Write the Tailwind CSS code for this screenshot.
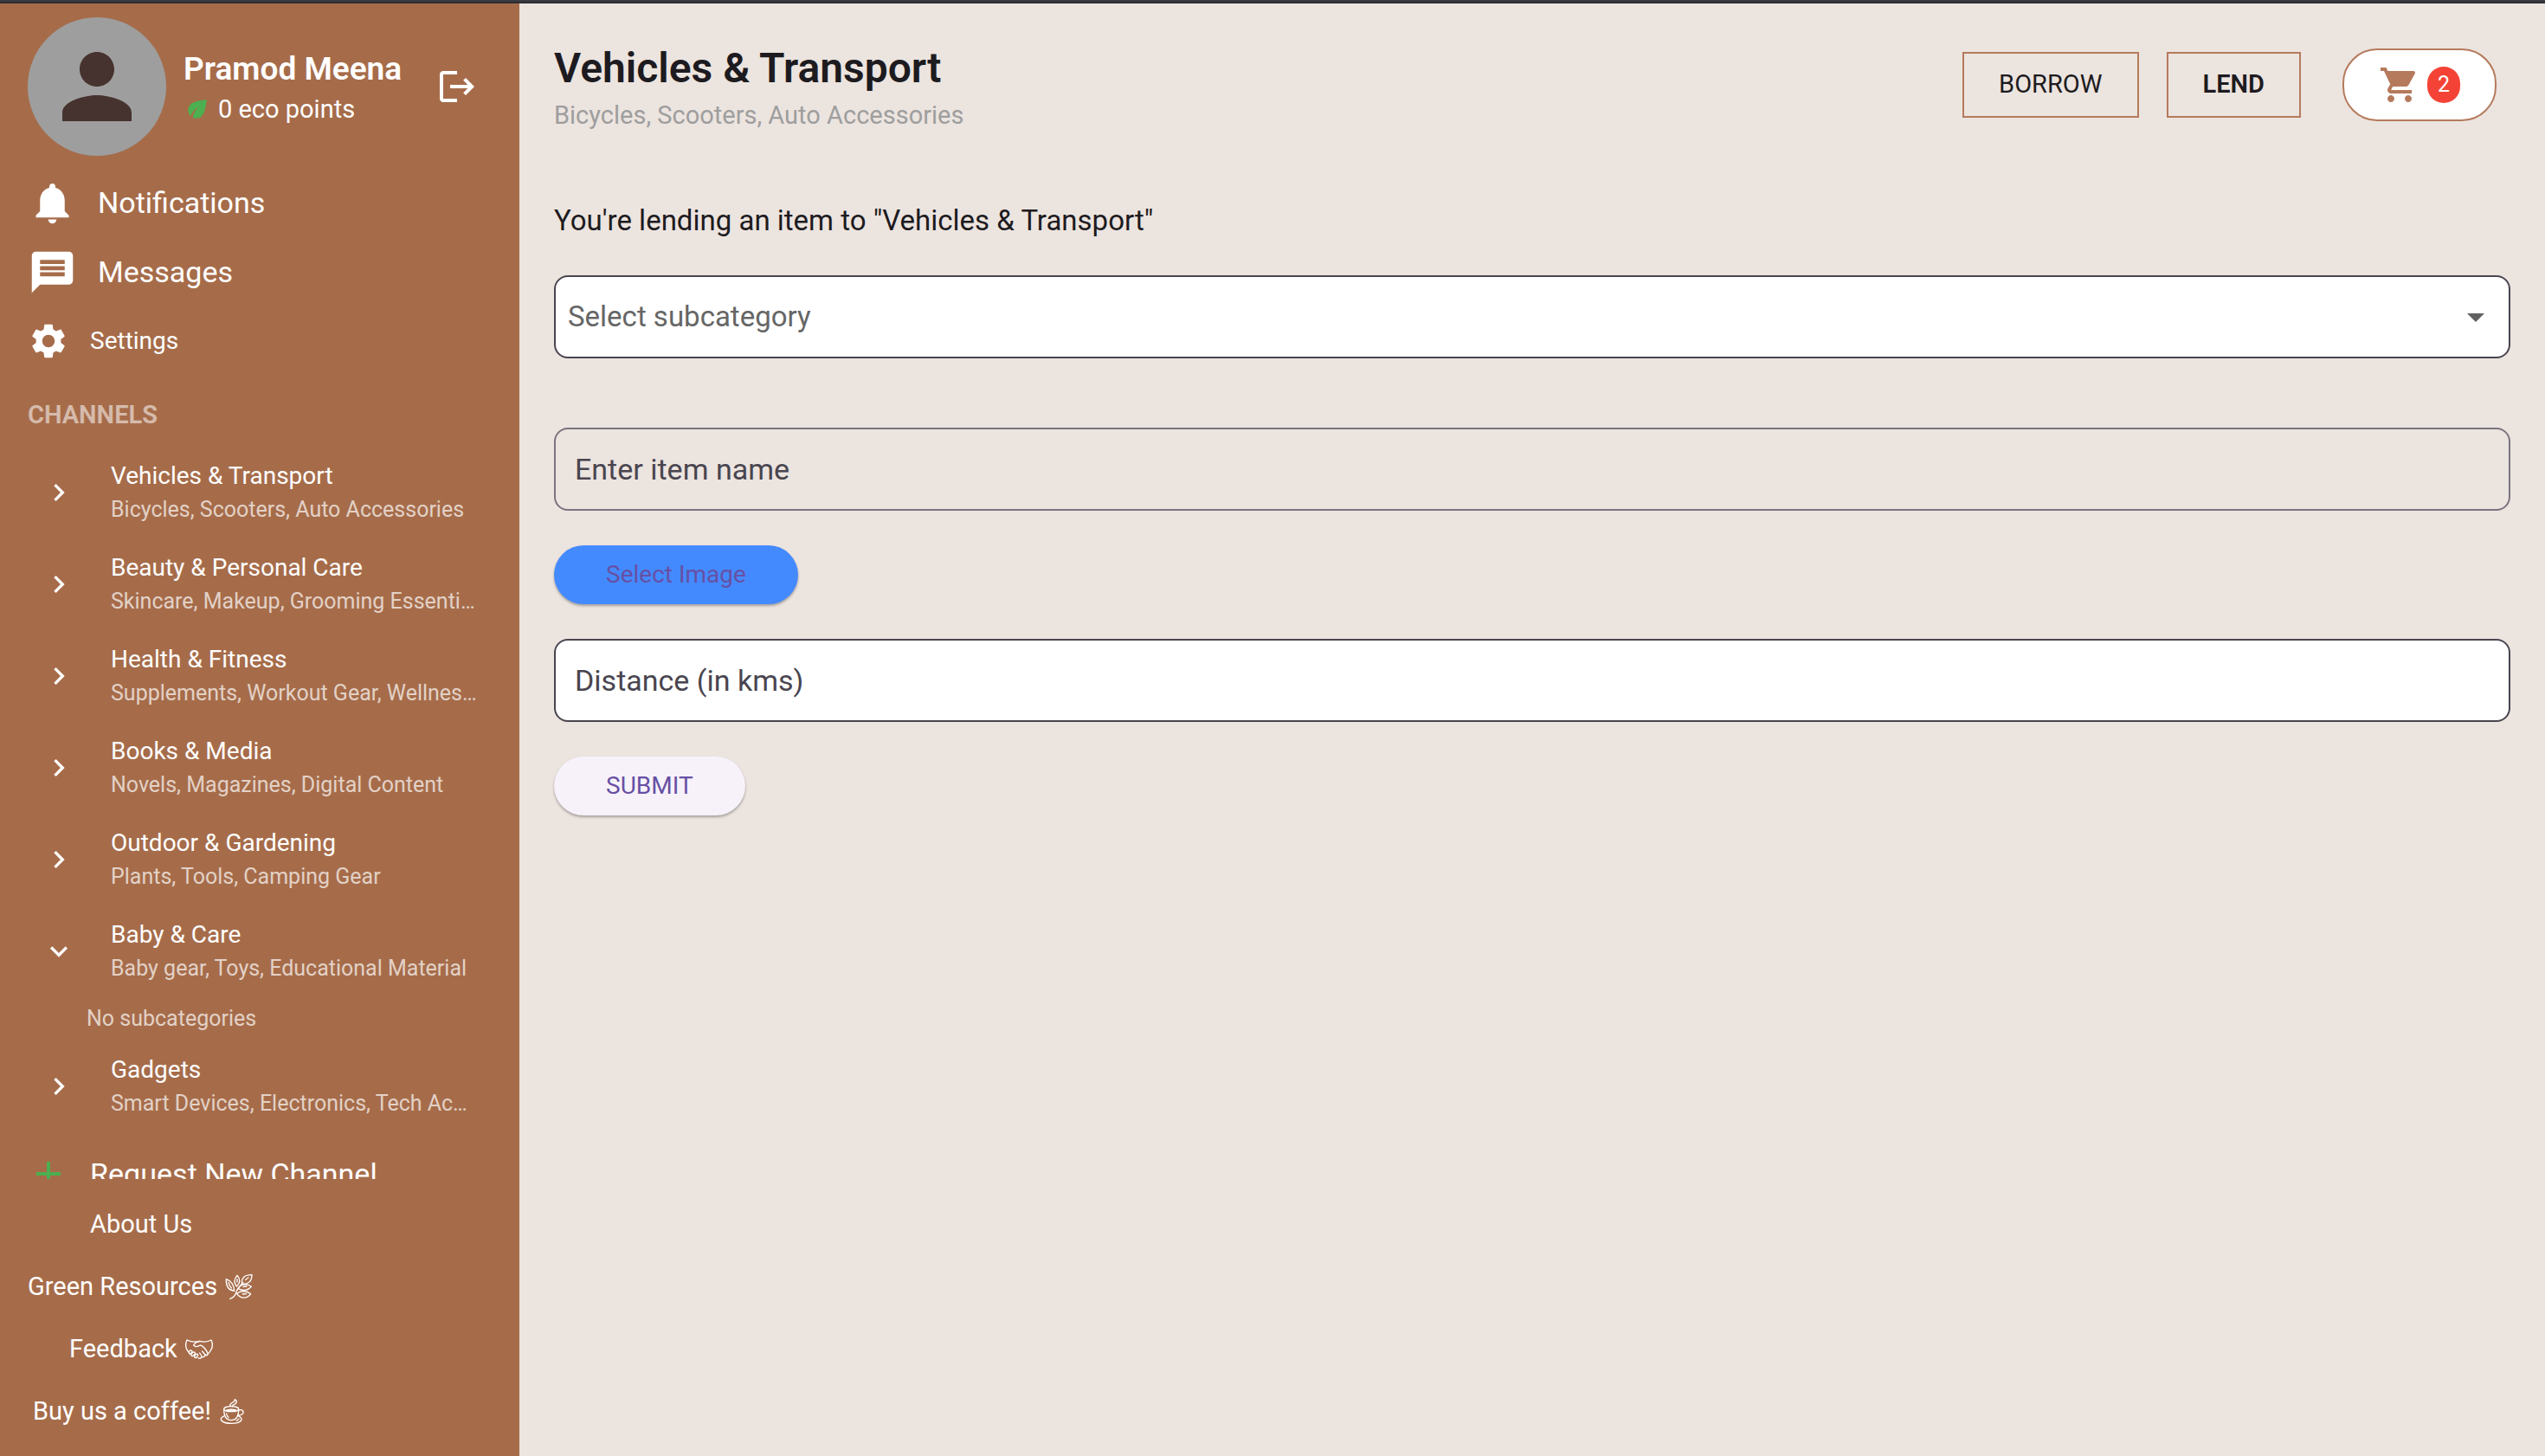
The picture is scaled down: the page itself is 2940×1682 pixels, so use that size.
<!DOCTYPE html>
<html lang="en">
<head>
<meta charset="utf-8">
<title>Vehicles &amp; Transport</title>
<script src="https://cdn.jsdelivr.net/npm/@tailwindcss/browser@4"></script>
</head>
<body class="flex h-screen flex-col overflow-hidden bg-[#ece4df] font-[Roboto,sans-serif] text-[#1d1b20]">
<svg class="hidden">
  <symbol id="chevron-right" viewBox="0 0 24 24"><path d="M8.59 16.59 13.17 12 8.59 7.41 10 6l6 6-6 6z"/></symbol>
  <symbol id="chevron-down" viewBox="0 0 24 24"><path d="M16.59 8.59 12 13.17 7.41 8.59 6 10l6 6 6-6z"/></symbol>
</svg>
<div class="h-1 shrink-0 border-t-2 border-[#3b3a40] bg-[#2d2c33]"></div>
<div class="flex min-h-0 flex-1">
  <aside class="flex w-[600px] shrink-0 flex-col bg-[#a66c4a] text-white">
    <div class="min-h-0 flex-1 overflow-hidden">
      <header class="flex h-[190px] items-center pt-0.5 pr-12 pl-8">
        <span class="flex size-40 shrink-0 items-center justify-center rounded-full bg-[#9e9e9e] text-[#46322e]">
          <svg class="size-30" viewBox="0 0 24 24" fill="currentColor"><path d="M12 12c2.21 0 4-1.79 4-4s-1.79-4-4-4-4 1.79-4 4 1.79 4 4 4zm0 2c-2.67 0-8 1.34-8 4v2h16v-2c0-2.66-5.33-4-8-4z"/></svg>
        </span>
        <div class="ml-5 flex-1 pt-1">
          <h2 class="text-[37px] leading-12 font-semibold whitespace-nowrap">Pramod Meena</h2>
          <p class="flex items-center gap-2 text-[29px] leading-11 whitespace-nowrap">
            <svg class="size-8 fill-[#4caf50]" viewBox="0 0 24 24"><path d="M6.05 8.05c-2.73 2.73-2.73 7.15-.02 9.88 1.47-3.4 4.09-6.24 7.36-7.93-2.77 2.34-4.71 5.61-5.39 9.32 2.6 1.23 5.8.78 7.95-1.37C19.43 14.47 20 4 20 4S9.53 4.57 6.05 8.05z"/></svg>
            0 eco points
          </p>
        </div>
        <button type="button" aria-label="Log out">
          <svg class="size-12" viewBox="0 0 24 24" fill="currentColor"><path d="M17 7l-1.41 1.41L18.17 11H8v2h10.17l-2.58 2.58L17 17l5-5zM4 5h8V3H4c-1.1 0-2 .9-2 2v14c0 1.1.9 2 2 2h8v-2H4V5z"/></svg>
        </button>
      </header>
      <nav>
        <a href="#" class="flex h-20 items-center gap-6 pl-8 text-[34px]">
          <svg class="size-[57px]" viewBox="0 0 24 24" fill="currentColor"><path d="M12 22c1.1 0 2-.9 2-2h-4c0 1.1.89 2 2 2zm6-6v-5c0-3.07-1.64-5.64-4.5-6.32V4c0-.83-.67-1.5-1.5-1.5s-1.5.67-1.5 1.5v.68C7.63 5.36 6 7.92 6 11v5l-2 2v1h16v-1l-2-2z"/></svg>
          Notifications
        </a>
        <a href="#" class="flex h-20 items-center gap-6 pl-8 text-[34px]">
          <svg class="size-[57px]" viewBox="0 0 24 24" fill="currentColor"><path d="M20 2H4c-1.1 0-1.99.9-1.99 2L2 22l4-4h14c1.1 0 2-.9 2-2V4c0-1.1-.9-2-2-2zm-2 12H6v-2h12v2zm0-3H6V9h12v2zm0-3H6V6h12v2z"/></svg>
          Messages
        </a>
        <a href="#" class="flex h-20 items-center gap-6 pl-8 text-[28px]">
          <svg class="size-12" viewBox="0 0 24 24" fill="currentColor"><path d="M19.14 12.94c.04-.3.06-.61.06-.94 0-.32-.02-.64-.07-.94l2.03-1.58c.18-.14.23-.41.12-.61l-1.92-3.32c-.12-.22-.37-.29-.59-.22l-2.39.96c-.5-.38-1.03-.7-1.62-.94l-.36-2.54c-.04-.24-.24-.41-.48-.41h-3.84c-.24 0-.43.17-.47.41l-.36 2.54c-.59.24-1.13.57-1.62.94l-2.39-.96c-.22-.08-.47 0-.59.22L2.74 8.87c-.12.21-.08.47.12.61l2.03 1.58c-.05.3-.09.63-.09.94s.02.64.07.94l-2.03 1.58c-.18.14-.23.41-.12.61l1.92 3.32c.12.22.37.29.59.22l2.39-.96c.5.38 1.03.7 1.62.94l.36 2.54c.05.24.24.41.48.41h3.84c.24 0 .44-.17.47-.41l.36-2.54c.59-.24 1.13-.56 1.62-.94l2.39.96c.22.08.47 0 .59-.22l1.92-3.32c.12-.22.07-.47-.12-.61l-2.01-1.58zM12 15.6c-1.98 0-3.6-1.62-3.6-3.6s1.62-3.6 3.6-3.6 3.6 1.62 3.6 3.6-1.62 3.6-3.6 3.6z"/></svg>
          Settings
        </a>
      </nav>
      <h3 class="flex h-[82px] items-center pt-2.5 pl-8 text-[29px] font-semibold text-white/54">CHANNELS</h3>
      <ul class="whitespace-nowrap">
        <li><a href="#" class="flex h-[106px] items-center gap-10 pl-12"><svg class="size-10 fill-white"><use href="#chevron-right"/></svg><span><span class="block text-[28px] leading-10">Vehicles &amp; Transport</span><span class="block text-[25px] leading-[38px] text-white/70">Bicycles, Scooters, Auto Accessories</span></span></a></li>
        <li><a href="#" class="flex h-[106px] items-center gap-10 pl-12"><svg class="size-10 fill-white"><use href="#chevron-right"/></svg><span><span class="block text-[28px] leading-10">Beauty &amp; Personal Care</span><span class="block text-[25px] leading-[38px] text-white/70">Skincare, Makeup, Grooming Essenti…</span></span></a></li>
        <li><a href="#" class="flex h-[106px] items-center gap-10 pl-12"><svg class="size-10 fill-white"><use href="#chevron-right"/></svg><span><span class="block text-[28px] leading-10">Health &amp; Fitness</span><span class="block text-[25px] leading-[38px] text-white/70">Supplements, Workout Gear, Wellnes…</span></span></a></li>
        <li><a href="#" class="flex h-[106px] items-center gap-10 pl-12"><svg class="size-10 fill-white"><use href="#chevron-right"/></svg><span><span class="block text-[28px] leading-10">Books &amp; Media</span><span class="block text-[25px] leading-[38px] text-white/70">Novels, Magazines, Digital Content</span></span></a></li>
        <li><a href="#" class="flex h-[106px] items-center gap-10 pl-12"><svg class="size-10 fill-white"><use href="#chevron-right"/></svg><span><span class="block text-[28px] leading-10">Outdoor &amp; Gardening</span><span class="block text-[25px] leading-[38px] text-white/70">Plants, Tools, Camping Gear</span></span></a></li>
        <li>
          <a href="#" class="flex h-[106px] items-center gap-10 pl-12"><svg class="size-10 fill-white"><use href="#chevron-down"/></svg><span><span class="block text-[28px] leading-10">Baby &amp; Care</span><span class="block text-[25px] leading-[38px] text-white/70">Baby gear, Toys, Educational Material</span></span></a>
          <p class="pl-25 text-[25px] leading-[50px] text-white/70">No subcategories</p>
        </li>
        <li><a href="#" class="flex h-[106px] items-center gap-10 pl-12"><svg class="size-10 fill-white"><use href="#chevron-right"/></svg><span><span class="block text-[28px] leading-10">Gadgets</span><span class="block text-[25px] leading-[38px] text-white/70">Smart Devices, Electronics, Tech Ac…</span></span></a></li>
      </ul>
      <a href="#" class="mt-2 flex h-20 items-center gap-6 pl-8 text-[34px]">
        <svg class="size-12 fill-[#4caf50]" viewBox="0 0 24 24"><path d="M19 13h-6v6h-2v-6H5v-2h6V5h2v6h6v2z"/></svg>
        Request New Channel
      </a>
    </div>
    <footer class="pt-[17px] pb-[15px] text-[29px]">
      <a href="#" class="flex h-18 items-center pl-26">About Us</a>
      <a href="#" class="flex h-18 items-center gap-2 pl-8">Green Resources
        <svg class="h-8 w-[34px]" viewBox="58 33 102 96" fill="none" stroke="currentColor" stroke-width="4" stroke-linecap="round" stroke-linejoin="round">
          <path d="M78 121c11-3 17-9 20-18 3-12 12-26 26-38"/>
          <path d="M93 94C71 91 64 75 65 53c17 6 27 17 28 41zM73 65c2 8 5 13 10 19"/>
          <path d="M101 78c-9-12-9-26 2-38 11 12 11 26-2 38zM103 53v10"/>
          <path d="M120 70c-4-22 10-32 34-32 0 20-12 35-34 32zM132 56c3-4 6-6 10-8"/>
          <path d="M106 85c12-17 31-17 46-6-10 12-29 18-46 6zM124 80c4-2 8-2 12-2"/>
          <path d="M102 103c14-11 34-10 48 1-12 18-36 18-48-1zM122 105c5-1 9-1 13-1"/>
        </svg>
      </a>
      <a href="#" class="flex h-18 items-center gap-2 pl-20">Feedback
        <svg class="h-8 w-[34px]" viewBox="36 24 102 96" fill="none" stroke="currentColor" stroke-width="4" stroke-linecap="round" stroke-linejoin="round">
          <path d="M45 39c14 7 30 8 44 4 12 3 28 3 40-4 8 16 4 34-14 51M45 39c-8 17-4 32 8 45"/>
          <path d="M89 43c-10 2-17 6-21 14 5 6 15 5 23 0 8 1 20 14 26 28 1 7-5 9-9 5"/>
          <path d="M53 84c-3-5 2-11 8-8 3 2 2 5 0 7l-4 4c-3 1-5-1-4-3zM60 92c-2-4 6-13 11-11 5 3 1 7-1 9l-4 4c-3 1-5 1-6-2zM71 98c-2-4 5-12 10-10 4 2 2 6-1 9l-3 3c-3 1-5 0-6-2zM84 101c6 4 11 1 11-4 6 3 13 0 12-6M89 84l8 12M98 78l10 12"/>
        </svg>
      </a>
      <a href="#" class="flex h-18 items-center gap-2.5 pl-9.5">Buy us a coffee!
        <svg class="h-8 w-[34px]" viewBox="48 30 102 96" fill="none" stroke="currentColor" stroke-width="4" stroke-linecap="round" stroke-linejoin="round">
          <path d="M62 69c0 22 6 38 25 38s26-16 26-38"/>
          <ellipse cx="87.500" cy="68" rx="25.500" ry="9"/>
          <ellipse cx="87.500" cy="72" rx="16" ry="2.500" fill="currentColor"/>
          <path d="M113 72c22-6 22 20-3 18M64 92c-22 8-14 26 24 26 34 0 46-16 24-26M71 84c1 6 3 10 7 14M106 108c4-1 6-3 8-6"/>
          <path d="M84 58c-6-12 16-10 16-23 10 6 6 15-3 18-5 2-7 4-6 7"/>
        </svg>
      </a>
    </footer>
  </aside>

  <main class="min-w-0 flex-1 px-10">
    <header class="flex h-[228px] items-start justify-between pr-4">
      <div class="pt-[47px]">
        <h1 class="text-5xl leading-14 font-semibold">Vehicles &amp; Transport</h1>
        <p class="text-[29px] leading-[52px] text-[#9e9e9e]">Bicycles, Scooters, Auto Accessories</p>
      </div>
      <div class="flex items-center pt-[52px] text-[29px]">
        <button type="button" class="h-19 border-2 border-[#b57a5c] px-10">BORROW</button>
        <button type="button" class="ml-8 h-19 border-2 border-[#b57a5c] px-10 font-semibold">LEND</button>
        <button type="button" aria-label="Cart, 2 items" class="ml-12 flex h-21 items-center gap-2 rounded-[40px] border-2 border-[#b57a5c] bg-white px-10">
          <svg class="size-12 fill-[#b57a5c]" viewBox="0 0 24 24"><path d="M7 18c-1.1 0-1.99.9-1.99 2S5.900 22 7 22s2-.9 2-2-.9-2-2-2zM1 2v2h2l3.600 7.590-1.350 2.450c-.16.28-.25.61-.25.96 0 1.100.9 2 2 2h12v-2H7.420c-.14 0-.25-.11-.25-.25l.03-.12.9-1.630h7.450c.75 0 1.410-.41 1.750-1.030l3.580-6.490c.08-.14.12-.31.12-.48 0-.55-.45-1-1-1H5.210l-.94-2H1zm16 16c-1.100 0-1.990.9-1.990 2s.89 2 1.990 2 2-.9 2-2-.9-2-2-2z"/></svg>
          <span class="flex h-[42px] w-[38px] items-center justify-center rounded-full bg-[#f44336] text-[25px] text-white">2</span>
        </button>
      </div>
    </header>
    <form class="flex flex-col items-start text-[33px]">
      <p class="leading-[46px]">You're lending an item to "Vehicles &amp; Transport"</p>
      <div class="relative mt-10 w-full">
        <select aria-label="Subcategory" class="block h-24 w-full appearance-none rounded-2xl border-2 border-[#49454f] bg-white px-3.5 text-[#666]">
          <option>Select subcategory</option>
        </select>
        <svg class="pointer-events-none absolute top-6 right-4 size-12 fill-[#616161]" viewBox="0 0 24 24"><path d="M7 10l5 5 5-5z"/></svg>
      </div>
      <input type="text" aria-label="Item name" placeholder="Enter item name" class="mt-20 h-24 w-full rounded-2xl border-2 border-[#79747e] px-[22px] text-[34px] placeholder:text-[#49454f]">
      <button type="button" class="mt-10 h-17 rounded-full bg-[#448aff] px-15 text-[28px] text-[#6750a4] shadow-[0_2px_3px_rgba(0,0,0,0.3)]">Select Image</button>
      <input type="text" aria-label="Distance in kilometres" placeholder="Distance (in kms)" class="mt-10 h-24 w-full rounded-2xl border-2 border-[#49454f] bg-white px-[22px] text-[34px] placeholder:text-[#49454f]">
      <button type="submit" class="mt-10 h-17 rounded-full bg-[#f7f2fa] px-15 text-[28px] text-[#6750a4] shadow-[0_2px_3px_rgba(0,0,0,0.3)]">SUBMIT</button>
    </form>
  </main>
</div>
</body>
</html>
